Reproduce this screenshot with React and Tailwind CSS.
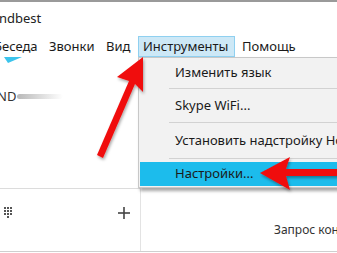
import React from "react";

export default function App() {
  const font = { fontFamily: '"Noto Sans", "Open Sans", sans-serif' };
  return (
    <div className="relative w-[337px] h-[253px] overflow-hidden bg-white text-[#1e1e1e]" style={font}>
      <div className="h-[2px] bg-[#9a9a9a]" />
      {/* title */}
      <div className="h-[34px] flex items-center text-[13px] text-[#222] -ml-[1px]">ndbest</div>
      {/* menu bar */}
      <div className="h-[21px] flex items-center text-[13px] text-[#1a1a1a] whitespace-nowrap">
        <span className="-ml-[6px] w-[55px] shrink-0">Беседа</span>
        <span className="w-[57px] shrink-0">Звонки</span>
        <span className="w-[32px] shrink-0">Вид</span>
        <span className="h-[21px] w-[97px] shrink-0 flex items-center pl-[4px] bg-[#cde8f6] border border-[#8fd0f0]">Инструменты</span>
        <span className="ml-[7px]">Помощь</span>
      </div>
      {/* body */}
      <div className="flex h-[131px]">
        <div className="w-[139px] border-r border-[#d6d6d6] relative">
          <svg className="absolute left-[4px] top-0" width="18" height="6" viewBox="0 0 18 6">
            <polygon points="0,0 18,0 4,6" fill="#3cc4ec" />
          </svg>
          <div className="mt-[30px] flex items-center text-[13px] text-[#333]">
            <span className="-ml-[3px]">ND</span>
            <span className="w-[46px] h-[5px] ml-[1px] bg-gradient-to-r from-[#9a9a9a] to-transparent rounded-sm opacity-70" />
          </div>
        </div>
        <div className="flex-1 bg-[#f3f3f3]" />
      </div>
      <div className="flex h-[64px] border-b border-[#cfcfcf]">
        <div className="w-[148px] border-r border-[#e3e3e3]">
          <div className="w-[140px] h-[1px] bg-[#dcdcdc]" />
          <div className="flex items-center justify-between pl-[4px] pr-[10px] mt-[18px] w-[140px]">
            <svg width="8" height="12" viewBox="0 0 8 12" fill="#555">
              <rect x="0" y="0" width="2" height="2" /><rect x="3" y="0" width="2" height="2" /><rect x="6" y="0" width="2" height="2" />
              <rect x="0" y="3" width="2" height="2" /><rect x="3" y="3" width="2" height="2" /><rect x="6" y="3" width="2" height="2" />
              <rect x="0" y="6" width="2" height="2" /><rect x="3" y="6" width="2" height="2" /><rect x="6" y="6" width="2" height="2" />
              <rect x="3" y="9" width="2" height="2" />
            </svg>
            <svg width="12" height="12" viewBox="0 0 12 12" stroke="#444" strokeWidth="1.6">
              <line x1="6" y1="0" x2="6" y2="12" /><line x1="0" y1="6" x2="12" y2="6" />
            </svg>
          </div>
        </div>
        <div className="flex-1 flex items-end pb-[12px] pl-[133px] text-[12px] text-[#333] whitespace-nowrap">Запрос контакта</div>
      </div>

      {/* dropdown menu */}
      <div className="absolute left-[138px] top-[57px] w-[210px] h-[131px] bg-[#f2f2f2] border border-[#c8c8c8] shadow-[2px_3px_3px_rgba(0,0,0,0.35)] text-[13px] text-[#1a1a1a] whitespace-nowrap">
        <div className="h-[30px] flex items-center pl-[36px]">Изменить язык</div>
        <div className="ml-[30px] h-[1px] bg-[#d2d2d2]" />
        <div className="h-[33px] flex items-center pl-[36px]">Skype WiFi...</div>
        <div className="ml-[30px] h-[1px] bg-[#d2d2d2]" />
        <div className="h-[35px] flex items-center pl-[36px]">Установить надстройку Holiday</div>
        <div className="ml-[30px] h-[1px] bg-[#d2d2d2]" />
        <div className="mt-[3px] mx-[1px] h-[24px] flex items-center pl-[35px] bg-[#1cbcec]">Настройки...</div>
      </div>

      {/* red arrows */}
      <svg className="absolute left-0 top-0 pointer-events-none" width="337" height="253" viewBox="0 0 337 253">
        <defs>
          <filter id="sh" x="-20%" y="-20%" width="140%" height="140%">
            <feDropShadow dx="1" dy="2" stdDeviation="1.5" floodColor="#000" floodOpacity="0.35" />
          </filter>
        </defs>
        <g filter="url(#sh)" fill="#f01010">
          <polygon points="143,57 143,92 135,84 103,158 97,155 129,81 117,77" />
          <polygon points="260,173 290,157 286,169 340,169 340,176 286,176 290,190" />
        </g>
      </svg>
    </div>
  );
}
